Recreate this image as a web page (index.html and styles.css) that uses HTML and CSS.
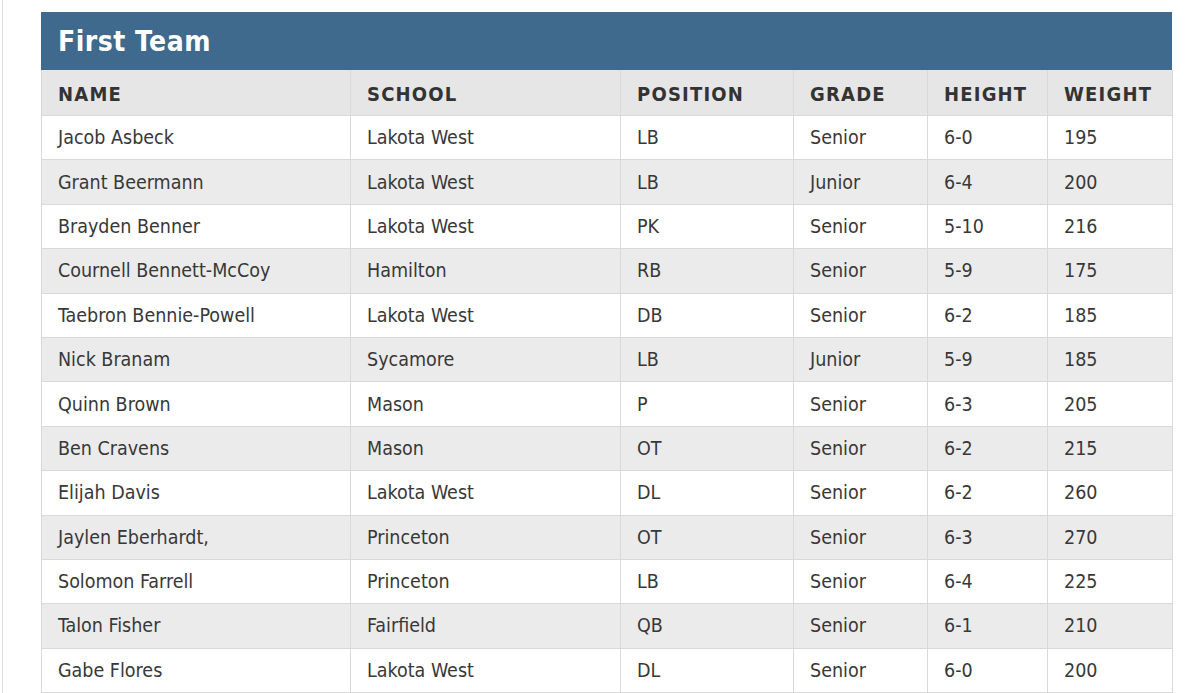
FILE: index.html
```html
<!DOCTYPE html>
<html>
<head>
<meta charset="utf-8">
<link rel="stylesheet" href="styles.css">
</head>
<body>
<div class="page">
  <div class="panel">
    <div class="panel-title">First Team</div>
    <table class="roster">
      <colgroup>
        <col class="c-name"><col class="c-school"><col class="c-pos"><col class="c-grade"><col class="c-height"><col class="c-weight">
      </colgroup>
      <thead>
        <tr><th>NAME</th><th>SCHOOL</th><th>POSITION</th><th>GRADE</th><th>HEIGHT</th><th>WEIGHT</th></tr>
      </thead>
      <tbody>
        <tr><td>Jacob Asbeck</td><td>Lakota West</td><td>LB</td><td>Senior</td><td>6-0</td><td>195</td></tr>
        <tr><td>Grant Beermann</td><td>Lakota West</td><td>LB</td><td>Junior</td><td>6-4</td><td>200</td></tr>
        <tr><td>Brayden Benner</td><td>Lakota West</td><td>PK</td><td>Senior</td><td>5-10</td><td>216</td></tr>
        <tr><td>Cournell Bennett-McCoy</td><td>Hamilton</td><td>RB</td><td>Senior</td><td>5-9</td><td>175</td></tr>
        <tr><td>Taebron Bennie-Powell</td><td>Lakota West</td><td>DB</td><td>Senior</td><td>6-2</td><td>185</td></tr>
        <tr><td>Nick Branam</td><td>Sycamore</td><td>LB</td><td>Junior</td><td>5-9</td><td>185</td></tr>
        <tr><td>Quinn Brown</td><td>Mason</td><td>P</td><td>Senior</td><td>6-3</td><td>205</td></tr>
        <tr><td>Ben Cravens</td><td>Mason</td><td>OT</td><td>Senior</td><td>6-2</td><td>215</td></tr>
        <tr><td>Elijah Davis</td><td>Lakota West</td><td>DL</td><td>Senior</td><td>6-2</td><td>260</td></tr>
        <tr><td>Jaylen Eberhardt,</td><td>Princeton</td><td>OT</td><td>Senior</td><td>6-3</td><td>270</td></tr>
        <tr><td>Solomon Farrell</td><td>Princeton</td><td>LB</td><td>Senior</td><td>6-4</td><td>225</td></tr>
        <tr><td>Talon Fisher</td><td>Fairfield</td><td>QB</td><td>Senior</td><td>6-1</td><td>210</td></tr>
        <tr><td>Gabe Flores</td><td>Lakota West</td><td>DL</td><td>Senior</td><td>6-0</td><td>200</td></tr>
      </tbody>
    </table>
  </div>
</div>
</body>
</html>
```

FILE: styles.css
```css
html, body {
  margin: 0;
  padding: 0;
  background: #ffffff;
}

body {
  font-family: "DejaVu Sans Condensed", "DejaVu Sans", sans-serif;
  color: #353535;
}

.page {
  margin-left: 2px;
  border-left: 1px solid #dcdcdc;
  height: 693px;
  overflow: hidden;
  padding: 12px 0 0 38px;
  box-sizing: border-box;
}

.panel {
  width: 1131px;
}

.panel-title {
  background: #3f6a8d;
  color: #ffffff;
  height: 58px;
  box-sizing: border-box;
  padding: 13px 0 0 17px;
  font-size: 28px;
  font-weight: bold;
  letter-spacing: 0.5px;
}

.roster {
  width: 100%;
  border-collapse: collapse;
  table-layout: fixed;
}

.c-name { width: 309px; }
.c-school { width: 270px; }
.c-pos { width: 173px; }
.c-grade { width: 134px; }
.c-height { width: 120px; }
.c-weight { width: 125px; }

.roster th,
.roster td {
  border: 1px solid #d9d9d9;
  text-align: left;
  padding: 0 0 0 16px;
  white-space: nowrap;
}

.roster th {
  background: #e6e6e6;
  height: 42px;
  padding-top: 3px;
  font-size: 20px;
  font-weight: bold;
  letter-spacing: 1.2px;
  color: #333333;
  border-top: none;
}

.roster td {
  height: 43.4px;
  font-size: 19.5px;
  color: #383838;
}

.roster tbody tr:nth-child(odd) td {
  background: #ffffff;
}

.roster tbody tr:nth-child(even) td {
  background: #ebebeb;
}
```
